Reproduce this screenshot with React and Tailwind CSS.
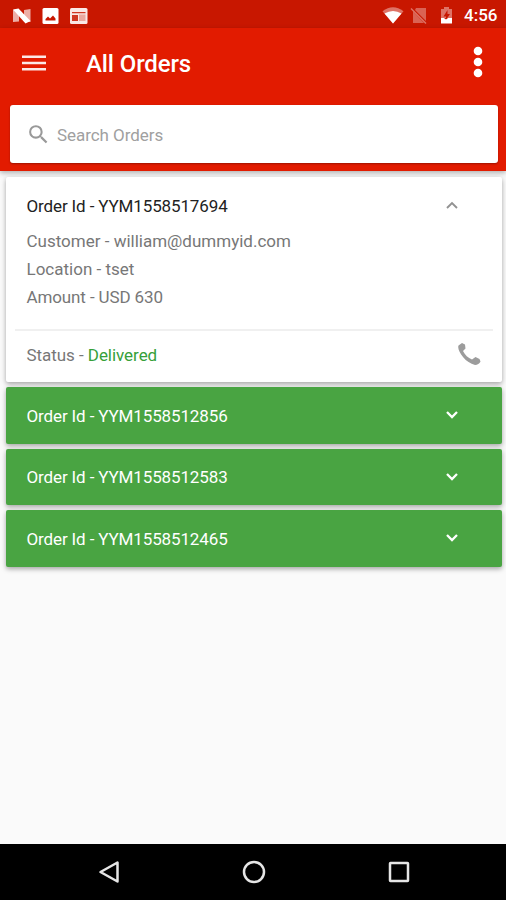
import React from "react";

// Orders listed under the search box, the first one is expanded
const orders = [
    { id: 'YYM1558517694', customer: 'william@dummyid.com', location: 'tset', amount: 'USD 630', status: 'Delivered', open: true },
    { id: 'YYM1558512856' },
    { id: 'YYM1558512583' },
    { id: 'YYM1558512465' },
];

// Android status bar with notification and system icons
function StatusBar() {
    return (
        <div className="flex h-7 items-center bg-[#c81700] pt-[3px] text-white">
            <svg className="ml-3 h-4 w-5" viewBox="0 0 20 16">
                <path d="M1 14V2l6-.5v12zM12 13.500V2l6.500-1v13z" fill="#fff" opacity="0.65" />
                <path d="M1 1.500L6.500.5 18.500 13 13.500 15.500z" fill="#fff" />
            </svg>
            <svg className="ml-[10px] h-4 w-[17px]" viewBox="0 0 17 16">
                <rect x="0.500" width="16" height="16" rx="1.500" fill="#fff" />
                <path d="M3.500 12.500V11l2.500-2.500L8 10.500l3-3 2.500 3v2z" fill="#c81700" />
            </svg>
            <svg className="ml-[11px] h-4 w-[18px]" viewBox="0 0 18 16">
                <rect width="17.500" height="16" rx="1.500" fill="#fff" opacity="0.9" />
                <path d="M2 4h13.500v1.300H2zM2 7h6v6H2z" fill="#c81700" opacity="0.85" />
                <path d="M9 6.500h6.500V13H9z" fill="#c81700" opacity="0.3" />
            </svg>
            <svg className="ml-auto h-[17px] w-[22px]" viewBox="0 0 22 17">
                <path d="M11 16.500L.5 4.200Q11-3.500 21.500 4.200z" fill="#fff" opacity="0.4" />
                <path d="M11 16.500L2.500 6.500Q11 1.500 19.500 6.500z" fill="#fff" />
            </svg>
            <svg className="ml-[6px] h-[17px] w-[18px]" viewBox="0 0 18 17">
                <path d="M6 1h10v13L5 3zM3 4.500L14 16H3z" fill="#fff" opacity="0.33" />
                <path d="M1 1.500L16 16.500" stroke="#fff" strokeWidth="1.400" opacity="0.4" />
            </svg>
            <svg className="ml-[12px] h-[17px] w-[13px]" viewBox="0 0 13 17">
                <path d="M4 0h5v2h3v9H1V2h3z" fill="#fff" opacity="0.4" />
                <path d="M7.500 3L3.500 9.500H6V13l4-6H7.500z" fill="#c81700" />
                <path d="M1 11h3l2 1.500L8 11h4v5.500H1z" fill="#fff" />
            </svg>
            <span className="ml-[11px] mr-[9px] w-[33px] whitespace-nowrap text-[17px] font-medium leading-none">4:56</span>
        </div>
    );
}

// App bar holding the title, menus and the search box
function Header() {
    return (
        <div className="h-[143px] bg-[#e21b00] shadow-[0_2px_5px_rgba(0,0,0,0.3)]">
            <div className="flex h-[72px] items-center text-white">
                <svg className="mb-[3px] ml-[22px] h-[18px] w-6" viewBox="0 0 24 18">
                    <path d="M0 2.700h24M0 9h24M0 15.300h24" stroke="#fff" strokeWidth="2.600" opacity="0.9" />
                </svg>
                <h1 className="ml-[40px] text-[24px] font-medium tracking-[-0.1px]">All Orders</h1>
                <svg className="mb-1 ml-auto mr-[23px] h-8 w-[10px]" viewBox="0 0 10 32">
                    <circle cx="5" cy="5" r="4.300" fill="#fff" />
                    <circle cx="5" cy="16" r="4.300" fill="#fff" />
                    <circle cx="5" cy="27" r="4.300" fill="#fff" />
                </svg>
            </div>
            <div className="ml-[9.500px] mr-[8.500px] mt-[5px] flex h-[58px] items-center rounded-[3px] bg-white shadow-[0_1px_2px_rgba(0,0,0,0.3)]">
                <svg className="ml-[16px] h-[25px] w-[25px]" viewBox="0 0 24 24" fill="#999">
                    <path d="M15.500 14h-.79l-.28-.27A6.471 6.471 0 0 0 16 9.500 6.500 6.500 0 1 0 9.500 16c1.610 0 3.090-.59 4.230-1.570l.27.28v.79l5 4.990L20.490 19l-4.990-5zm-6 0C7.010 14 5 11.990 5 9.500S7.010 5 9.500 5 14 7.010 14 9.500 11.990 14 9.500 14z" />
                </svg>
                <span className="ml-[6.500px] pt-[3px] text-[17px] tracking-[-0.05px] text-[#a0a0a0]">Search Orders</span>
            </div>
        </div>
    );
}

// Small arrow on the right side of each order
function Chevron({ up }) {
    return (
        <svg className="mr-[44px] h-3 w-3" viewBox="0 0 12 12" fill="none" strokeWidth="2.300">
            {up ? <path d="M1 8L6 3l5 5" stroke="#929292" strokeWidth="1.900" /> : <path d="M1 3l5 5 5-5" stroke="#fff" />}
        </svg>
    );
}

// Expanded white card with the order details
function OpenOrder({ order }) {
    return (
        <div className="h-[205px] rounded-[2px] bg-white text-[#777] shadow-[0_2px_5px_rgba(0,0,0,0.35)]">
            <div className="flex h-[57px] items-center justify-between pl-[21px] text-[#222]">
                <span className="pt-0.5 tracking-[-0.13px]">Order Id - {order.id}</span>
                <Chevron up />
            </div>
            <div className="-mt-[6px] h-[101px] pl-[21px] leading-[27.8px]">
                <p>Customer - {order.customer}</p>
                <p>Location - {order.location}</p>
                <p className="tracking-[-0.12px]">Amount - {order.amount}</p>
            </div>
            <div className="mx-[9px] flex h-[51px] items-center justify-between border-t-2 border-[#f0f0f0] pl-3">
                <span className="tracking-[-0.05px]">Status - <span className="text-[#36a03a]">{order.status}</span></span>
                <svg className="mb-[3px] mr-[11.500px] h-6 w-6" viewBox="0 0 24 24" fill="#9c9c9c">
                    <path d="M5 1L1.500 3.500C-.5 8 8 21 18 23c2.500 0 4.500-1.500 5.500-3.500L22.500 17l-4-2-3.500 2.500C11 16 8 13 6 9l2.500-2.500L8 2.500z" />
                </svg>
            </div>
        </div>
    );
}

// Collapsed green row
function ClosedOrder({ order }) {
    return (
        <div className="flex h-[56.500px] items-center justify-between rounded-[2px] bg-[#49a442] pl-[21px] text-white shadow-[0_2px_5px_rgba(0,0,0,0.35)]">
            <span className="pt-0.5 tracking-[-0.13px]">Order Id - {order.id}</span>
            <Chevron />
        </div>
    );
}

// Android navigation buttons
function NavBar() {
    return (
        <div className="flex h-14 items-center justify-center bg-black pl-[1px]">
            <svg className="mr-[119px] h-[26px] w-[26px]" viewBox="0 0 26 26" fill="none" stroke="#e6e6e6" strokeWidth="2.500">
                <path d="M21.500 3.500v19L4.500 13z" strokeLinejoin="round" />
            </svg>
            <svg className="h-[26px] w-[26px]" viewBox="0 0 26 26" fill="none" stroke="#e6e6e6" strokeWidth="2.500">
                <circle cx="13" cy="13" r="10" />
            </svg>
            <svg className="ml-[119px] h-[26px] w-[26px]" viewBox="0 0 26 26" fill="none" stroke="#e6e6e6" strokeWidth="2.500">
                <rect x="4" y="4" width="18" height="18" rx="0.500" />
            </svg>
        </div>
    );
}

// Main App component
export default function App() {
    return (
        <div className="flex h-[900px] w-[506px] flex-col overflow-hidden bg-[#fafafa] font-[Roboto,sans-serif]">
            <StatusBar />
            <Header />
            <div className="flex flex-1 flex-col gap-[5px] pl-[5.500px] pr-[4.500px] pt-[6px] text-[17px]">
                {orders.map((order) => (
                    order.open ? <OpenOrder key={order.id} order={order} /> : <ClosedOrder key={order.id} order={order} />
                ))}
            </div>
            <NavBar />
        </div>
    );
}
